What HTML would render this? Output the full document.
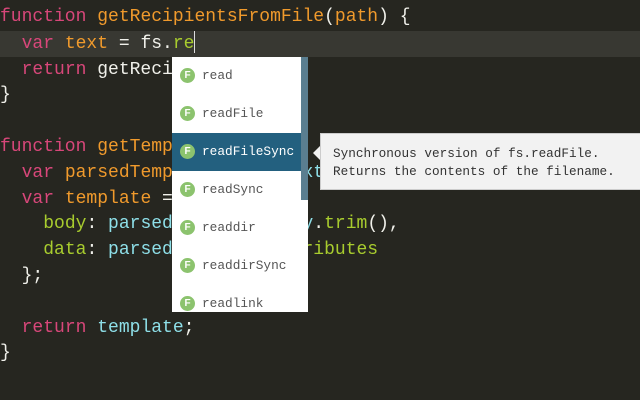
<!DOCTYPE html>
<html><head><style>
body{margin:0;width:640px;height:400px;background:#262620;overflow:hidden;position:relative;font-family:"Liberation Mono","DejaVu Sans Mono",monospace}
.code{position:absolute;left:0;top:5px;font-size:18px;line-height:25.8px;color:#f0f0ea;white-space:pre}
.hl{position:absolute;left:0;top:31px;width:640px;height:26px;background:#383832}
.k{color:#d8477a}.f{color:#f09a2c}.c{color:#8edfe8}.g{color:#a8cc2e}
.cur{display:inline-block;width:1px;height:22px;background:#ddd;vertical-align:-5px}
.pop{position:absolute;left:172px;top:57px;width:136px;height:255px;background:#fff}
.sb{position:absolute;right:0;top:0;width:7px;height:143px;background:#5a7e90}
.it{position:absolute;left:0;width:129px;height:38px;font-size:12.8px;color:#555;line-height:38px}
.it span.i{position:absolute;left:8px;top:11px;width:15px;height:15px;border-radius:50%;background:#8cc36e;color:#fff;font:bold 10px/15px "Liberation Sans",sans-serif;text-align:center}
.it span.t{position:absolute;left:30px}
.sel{background:#23607f;color:#fff}
.tip{position:absolute;left:320px;top:133px;width:330px;height:57px;background:#f2f2f2;border:1px solid #ccc;font-size:12.7px;line-height:18px;color:#333;padding:11px 12px;box-sizing:border-box;white-space:pre}
.arr{position:absolute;left:313px;top:145px;width:0;height:0;border-top:8px solid transparent;border-bottom:8px solid transparent;border-right:8px solid #f2f2f2}
</style></head><body>
<div class="hl"></div>
<div class="code"><span class="k">function</span> <span class="f">getRecipientsFromFile</span>(<span class="f">path</span>) {
  <span class="k">var</span> <span class="f">text</span> = fs.<span class="g">re</span><span class="cur"></span>
  <span class="k">return</span> getRecipients;
}

<span class="k">function</span> <span class="f">getTemplate</span>(<span class="f">text</span>) {
  <span class="k">var</span> <span class="f">parsedTemplate</span> = <span class="c">fm(text)</span>;
  <span class="k">var</span> <span class="f">template</span> = {
    <span class="g">body</span>: <span class="c">parsedTemplate.body</span>.<span class="g">trim</span>(),
    <span class="g">data</span>: <span class="c">parsedTemplate.</span><span class="g">attributes</span>
  };

  <span class="k">return</span> <span class="c">template</span>;
}</div>
<div class="pop">
<div class="it" style="top:0"><span class="i">F</span><span class="t">read</span></div>
<div class="it" style="top:38px"><span class="i">F</span><span class="t">readFile</span></div>
<div class="it sel" style="top:76px"><span class="i">F</span><span class="t">readFileSync</span></div>
<div class="it" style="top:114px"><span class="i">F</span><span class="t">readSync</span></div>
<div class="it" style="top:152px"><span class="i">F</span><span class="t">readdir</span></div>
<div class="it" style="top:190px"><span class="i">F</span><span class="t">readdirSync</span></div>
<div class="it" style="top:228px"><span class="i">F</span><span class="t">readlink</span></div>
<div class="sb"></div>
</div>
<div class="arr"></div>
<div class="tip">Synchronous version of fs.readFile.
Returns the contents of the filename.</div>
</body></html>
